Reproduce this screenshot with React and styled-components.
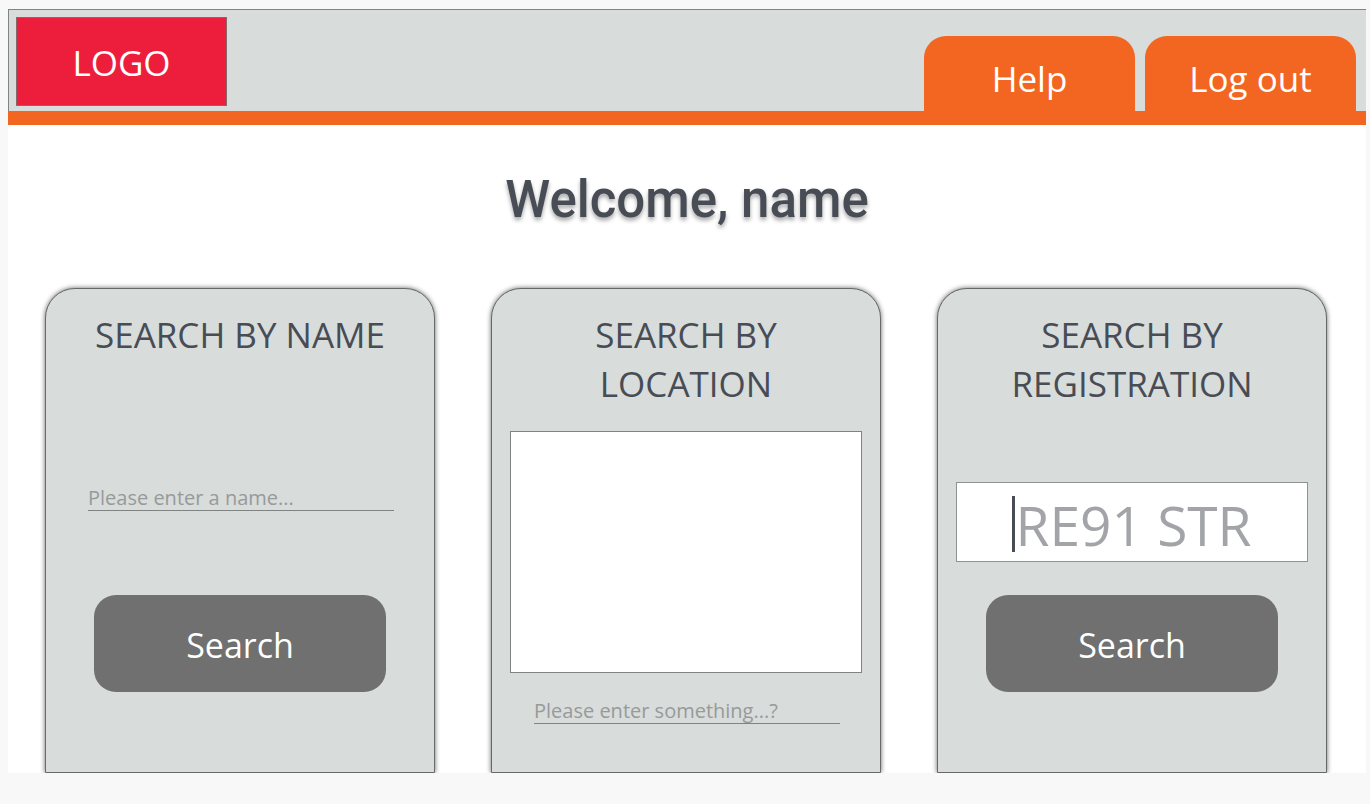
import React from "react";
import styled, { createGlobalStyle } from "styled-components";

const GlobalStyle = createGlobalStyle`
  *, *::before, *::after { box-sizing: border-box; }
  body {
    margin: 0;
    background: #f8f8f8;
    color: #474c55;
    font-family: "Open Sans", "Noto Sans", sans-serif;
  }
`;

const Frame = styled.div`
  margin: 9px 4px 31px 8px;
  background: #fff;
  overflow: hidden;
`;

const Header = styled.header`
  display: flex;
  justify-content: space-between;
  align-items: flex-end;
  padding: 7px 10px 0 7px;
  background: #d8dcdb;
  border: solid #7f8382;
  border-width: 1px 0 0 1px;
`;

const Logo = styled.a`
  display: flex;
  align-items: center;
  justify-content: center;
  width: 211px;
  height: 89px;
  margin-bottom: 5px;
  padding-top: 2px;
  background: #ed1e3c;
  border: 1px solid #87696c;
  color: #fff;
  font-size: 35px;
  line-height: 48px;
  text-decoration: none;
`;

const Tabs = styled.nav`
  display: flex;
  gap: 10px;
`;

const Tab = styled.button`
  width: 211px;
  height: 75px;
  padding: 10px 0 0;
  border: 0;
  border-radius: 22px 22px 0 0;
  background: #f36621;
  color: #fff;
  font-family: inherit;
  font-size: 35px;
  line-height: 48px;
`;

const AccentBar = styled.div`
  height: 14px;
  background: #f36621;
`;

const Welcome = styled.h1`
  margin: 0;
  padding: 43px 0 56px;
  font-family: Roboto, sans-serif;
  font-size: 51px;
  font-weight: 500;
  line-height: 64px;
  text-align: center;
  text-shadow: 0 3px 4px rgba(0, 0, 0, 0.35);
`;

const Cards = styled.main`
  display: grid;
  grid-template-columns: repeat(3, minmax(0, 1fr));
  gap: 56px;
  padding: 0 39px 0 37px;
`;

const Card = styled.form`
  display: flex;
  flex-direction: column;
  padding: 21px 18px 48px;
  background: #d8dcdb;
  border: 1px solid #66696a;
  border-radius: 30px 30px 0 0;
  box-shadow: 0 0 5px rgba(0, 0, 0, 0.6);
`;

const CardTitle = styled.h2`
  min-height: 98px;
  margin: 0;
  padding: 0 20px;
  font-size: 35px;
  font-weight: 400;
  line-height: 49px;
  text-align: center;
`;

const LineInput = styled.input`
  height: 30px;
  margin: ${({ $top }) => $top}px 22px 0 24px;
  padding: 4px 0 0;
  border: 0;
  border-bottom: 1px solid #7f8382;
  border-radius: 0;
  background: transparent;
  color: #474c55;
  font-family: inherit;
  font-size: 20px;
  outline: 0;
  &::placeholder { color: #979a9a; opacity: 1; }
`;

const MapArea = styled.div`
  height: 242px;
  margin-top: 23px;
  background: #fff;
  border: 1px solid #7f8382;
`;

const PlateBox = styled.label`
  display: flex;
  align-items: center;
  justify-content: center;
  height: 80px;
  margin-top: 74px;
  padding-top: 4px;
  background: #fff;
  border: 1px solid #8f9292;
`;

const Caret = styled.span`
  width: 3px;
  height: 56px;
  background: #474c55;
`;

const PlateInput = styled.input`
  field-sizing: content;
  max-width: 100%;
  height: 74px;
  padding: 0;
  border: 0;
  background: transparent;
  color: #474c55;
  font-family: inherit;
  font-size: 55px;
  outline: 0;
  &::placeholder { color: #a3a4a8; opacity: 1; }
`;

const SearchButton = styled.button`
  height: 97px;
  margin: ${({ $top }) => $top}px 30px 0;
  padding: 2px 0 0;
  border: 0;
  border-radius: 22px;
  background: #707070;
  color: #fff;
  font-family: inherit;
  font-size: 34px;
  line-height: 48px;
`;

const stay = (event) => event.preventDefault();

export default function App() {
  return (
    <>
      <GlobalStyle />
      <Frame>
        <Header>
          <Logo href="#">LOGO</Logo>
          <Tabs>
            <Tab type="button">Help</Tab>
            <Tab type="button">Log out</Tab>
          </Tabs>
        </Header>
        <AccentBar />
        <Welcome>Welcome, name</Welcome>
        <Cards>
          <Card onSubmit={stay}>
            <CardTitle id="by-name">SEARCH BY NAME</CardTitle>
            <LineInput
              $top={73}
              type="text"
              aria-labelledby="by-name"
              placeholder="Please enter a name..."
            />
            <SearchButton $top={84}>Search</SearchButton>
          </Card>
          <Card onSubmit={stay}>
            <CardTitle id="by-location">SEARCH BY LOCATION</CardTitle>
            <MapArea />
            <LineInput
              $top={21}
              type="text"
              aria-labelledby="by-location"
              placeholder="Please enter something...?"
            />
          </Card>
          <Card onSubmit={stay}>
            <CardTitle id="by-registration">SEARCH BY REGISTRATION</CardTitle>
            <PlateBox>
              <Caret />
              <PlateInput
                type="text"
                aria-labelledby="by-registration"
                placeholder="RE91 STR"
              />
            </PlateBox>
            <SearchButton $top={33}>Search</SearchButton>
          </Card>
        </Cards>
      </Frame>
    </>
  );
}
